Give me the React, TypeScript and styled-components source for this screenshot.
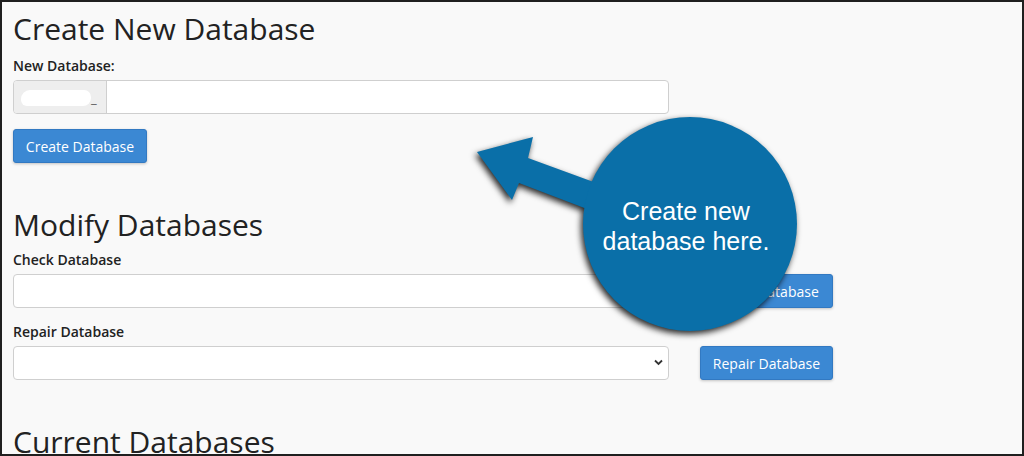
import React from "react";
import styled, { createGlobalStyle } from "styled-components";

const GlobalStyle = createGlobalStyle`
  html, body {
    margin: 0;
    padding: 0;
    background: #1f1f1f;
  }
  * {
    box-sizing: border-box;
  }
`;

const Frame = styled.div`
  position: relative;
  width: 1024px;
  height: 456px;
  overflow: hidden;
  border: 2px solid #1f1f1f;
  background: #f9f9f9;
  padding: 9px 11px 0;
  font-family: "Open Sans", "Noto Sans", sans-serif;
  color: #222;
`;

const Section = styled.section`
  margin-bottom: 44px;
`;

const Heading = styled.h2`
  margin: 0;
  font-size: 30px;
  line-height: 36px;
  font-weight: 400;
  color: #222;
`;

const FormGroup = styled.div<{ $first?: boolean }>`
  margin-top: ${(p) => (p.$first ? "9px" : "7px")};
  & + & {
    margin-top: 14px;
  }
`;

const Label = styled.label`
  display: block;
  font-size: 14px;
  line-height: 20px;
  font-weight: 600;
  margin-bottom: 4px;
  color: #222;
`;

const Row = styled.div`
  display: flex;
  align-items: center;
  gap: 31px;
`;

const InputGroup = styled.div`
  display: flex;
  width: 656px;
  height: 34px;
  border: 1px solid #cfcfcf;
  border-radius: 4px;
  background: #fff;
  overflow: hidden;
`;

const Addon = styled.span`
  display: flex;
  align-items: flex-end;
  width: 93px;
  padding: 0 0 8px 7px;
  background: #eeeeee;
  border-right: 1px solid #cfcfcf;
  font-size: 13px;
  line-height: 1;
  color: #555;
`;

const Redacted = styled.span`
  display: inline-block;
  width: 70px;
  height: 16px;
  margin-bottom: -1px;
  border-radius: 9px 7px 8px 6px;
  background: #fff;
`;

const TextInput = styled.input`
  flex: 1;
  border: none;
  outline: none;
  background: transparent;
  font: inherit;
  padding: 0 10px;
`;

const Field = styled.input`
  width: 656px;
  height: 34px;
  border: 1px solid #cfcfcf;
  border-radius: 4px;
  background: #fff;
  padding: 0 10px;
  font: inherit;
  outline: none;
`;

const SelectWrap = styled.div`
  position: relative;
  width: 656px;
  height: 34px;
`;

const Select = styled.select`
  width: 100%;
  height: 100%;
  appearance: none;
  border: 1px solid #cfcfcf;
  border-radius: 4px;
  background: #fff;
  padding: 0 10px;
  font: inherit;
  outline: none;
`;

const Chevron = styled.svg`
  position: absolute;
  right: 6px;
  top: 13px;
  pointer-events: none;
`;

const Button = styled.button<{ $width: number }>`
  width: ${(p) => p.$width}px;
  height: 34px;
  border: 1px solid #3279c2;
  border-radius: 3px;
  background: #3b88d3;
  color: #fff;
  font-family: "Open Sans", "Noto Sans", sans-serif;
  font-size: 14px;
  padding: 0;
  box-shadow: 0 1px 3px rgba(0, 0, 0, 0.22);
  cursor: pointer;
`;

const PrimaryButton = styled(Button)`
  margin-top: 15px;
`;

const Callout = styled.div`
  position: absolute;
  left: -2px;
  top: -2px;
  width: 1024px;
  height: 456px;
  pointer-events: none;
`;

const CalloutShape = styled.svg`
  position: absolute;
  left: 0;
  top: 0;
  filter: drop-shadow(-2px 3px 3px rgba(0, 0, 0, 0.85));
`;

const CalloutText = styled.div`
  position: absolute;
  left: 586px;
  top: 196px;
  width: 200px;
  text-align: center;
  font-family: "Liberation Sans", Arial, sans-serif;
  font-size: 25px;
  line-height: 30px;
  color: #fff;
`;

export default function App() {
  return (
    <>
      <GlobalStyle />
      <Frame>
        <Section>
          <Heading>Create New Database</Heading>
          <FormGroup $first>
            <Label>New Database:</Label>
            <InputGroup>
              <Addon>
                <Redacted />_
              </Addon>
              <TextInput />
            </InputGroup>
          </FormGroup>
          <PrimaryButton $width={134}>Create Database</PrimaryButton>
        </Section>

        <Section>
          <Heading>Modify Databases</Heading>
          <FormGroup>
            <Label>Check Database</Label>
            <Row>
              <Field />
              <Button $width={133}>Check Database</Button>
            </Row>
          </FormGroup>
          <FormGroup>
            <Label>Repair Database</Label>
            <Row>
              <SelectWrap>
                <Select>
                  <option></option>
                </Select>
                <Chevron width="9" height="7" viewBox="0 0 9 7">
                  <polyline
                    points="1,1.5 4.5,5 8,1.5"
                    fill="none"
                    stroke="#333"
                    strokeWidth="1.8"
                  />
                </Chevron>
              </SelectWrap>
              <Button $width={133}>Repair Database</Button>
            </Row>
          </FormGroup>
        </Section>

        <Section>
          <Heading>Current Databases</Heading>
        </Section>

        <Callout>
          <CalloutShape width="1024" height="456" viewBox="0 0 1024 456">
            <g fill="#0a6fa8">
              <polygon points="477,152 533,137 528,158 610,188 600,214 519,183 512,200" />
              <circle cx="690" cy="224" r="107" />
            </g>
          </CalloutShape>
          <CalloutText>
            Create new
            <br />
            database here.
          </CalloutText>
        </Callout>
      </Frame>
    </>
  );
}
